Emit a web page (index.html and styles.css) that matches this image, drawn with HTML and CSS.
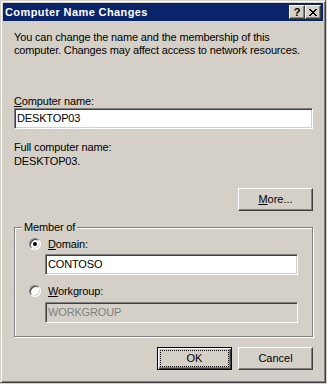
FILE: index.html
```html
<!DOCTYPE html>
<html lang="en">
<head>
    <meta charset="UTF-8">
    <meta name="viewport" content="width=device-width, initial-scale=1.0">
    <title>Computer Name Changes</title>
    <link rel="stylesheet" href="styles.css">
</head>
<body>

<div class="window">
    <div class="titlebar">
        <span class="title">Computer Name Changes</span>
        <div class="caption-btns">
            <button class="cap help">?</button>
            <button class="cap close">
                <svg width="8" height="7" viewBox="0 0 8 7" shape-rendering="crispEdges">
                    <path d="M0 0h2v1H0zM6 0h2v1H6zM1 1h2v1H1zM5 1h2v1H5zM2 2h4v1H2zM3 3h2v1H3zM2 4h4v1H2zM1 5h2v1H1zM5 5h2v1H5zM0 6h2v1H0zM6 6h2v1H6z" fill="#000"/>
                </svg>
            </button>
        </div>
    </div>

    <div class="content">
        <p class="intro">You can change the name and the membership of this<br>computer. Changes may affect access to network resources.</p>

        <div class="label name-label"><u>C</u>omputer name:</div>
        <div class="field">DESKTOP03</div>

        <div class="label full-label">Full computer name:</div>
        <div class="label full-value">DESKTOP03.</div>

        <div class="btn-row more-row">
            <button class="btn"><u>M</u>ore...</button>
        </div>

        <div class="group">
            <div class="group-title">Member of</div>

            <div class="opt opt-domain">
                <span class="radio checked"></span>
                <span><u>D</u>omain:</span>
            </div>
            <div class="field indent">CONTOSO</div>

            <div class="opt opt-work">
                <span class="radio"></span>
                <span><u>W</u>orkgroup:</span>
            </div>
            <div class="field indent disabled">WORKGROUP</div>
        </div>

        <div class="btn-row actions">
            <button class="btn default"><span class="focus">OK</span></button>
            <button class="btn">Cancel</button>
        </div>
    </div>
</div>

</body>
</html>
```

FILE: styles.css
```css
body {
    margin: 0;
    background-color: #D4D0C8;
    font-family: "Liberation Sans", Arial, sans-serif;
    font-size: 11px;
    line-height: 13px;
    letter-spacing: -0.15px;
    color: #000;
}
u {
    text-decoration: underline;
    text-underline-offset: 1px;
}
.window {
    width: 326px;
    height: 383px;
    box-sizing: border-box;
    border: 1px solid;
    border-color: #D4D0C8 #404040 #404040 #D4D0C8;
    box-shadow: inset 1px 1px #fff, inset -1px -1px #808080;
    padding: 2px;
}
.titlebar {
    height: 18px;
    background-color: #0A246A;
    display: flex;
    align-items: center;
    justify-content: space-between;
    padding: 0 2px 0 2px;
}
.title {
    color: #fff;
    font-weight: bold;
    letter-spacing: 0.4px;
}
.caption-btns {
    display: flex;
    gap: 0;
}
.cap {
    width: 16px;
    height: 14px;
    box-sizing: border-box;
    margin: 0;
    padding: 0;
    background-color: #D4D0C8;
    border: 1px solid;
    border-color: #fff #404040 #404040 #fff;
    box-shadow: inset -1px -1px #808080;
    display: flex;
    align-items: center;
    justify-content: center;
    font-family: "Liberation Sans", Arial, sans-serif;
    font-weight: bold;
    font-size: 11px;
    line-height: 11px;
    color: #000;
}
.cap.close {
    padding-top: 1px;
}
.content {
    padding: 0 10px 0 11px;
}
.intro {
    margin: 10px 0 0 0;
}
.name-label {
    margin-top: 38px;
}
.field {
    height: 21px;
    box-sizing: border-box;
    background-color: #fff;
    border: 1px solid;
    border-color: #808080 #fff #fff #808080;
    box-shadow: inset 1px 1px #404040, inset -1px -1px #D4D0C8;
    padding: 0 2px;
    line-height: 17px;
    padding-top: 1px;
}
.field.disabled {
    background-color: #D4D0C8;
    color: #808080;
}
.full-label {
    margin-top: 12px;
}
.full-value {
    margin-top: 1px;
}
.btn-row {
    display: flex;
    justify-content: flex-end;
    gap: 6px;
}
.more-row {
    margin-top: 20px;
}
.btn {
    width: 75px;
    height: 23px;
    box-sizing: border-box;
    margin: 0;
    padding: 0;
    background-color: #D4D0C8;
    border: 1px solid;
    border-color: #fff #404040 #404040 #fff;
    box-shadow: inset -1px -1px #808080;
    font-family: "Liberation Sans", Arial, sans-serif;
    font-size: 11px;
    line-height: 13px;
    color: #000;
}
.btn.default {
    border: 1px solid #000;
    box-shadow: inset 1px 1px #fff, inset -1px -1px #404040, inset -2px -2px #808080;
    padding: 2px;
    display: flex;
}
.focus {
    flex: 1;
    border: 1px dotted #000;
    display: flex;
    align-items: center;
    justify-content: center;
}
.group {
    margin-top: 16px;
    border: 1px solid #808080;
    box-shadow: inset 1px 1px #fff, 1px 1px #fff;
    padding: 0 14px 13px 14px;
}
.group-title {
    width: fit-content;
    margin: -7px 0 0 -7px;
    padding: 0 2px;
    background-color: #D4D0C8;
}
.opt {
    display: flex;
    align-items: flex-start;
    gap: 7px;
}
.opt-domain {
    margin-top: 4px;
}
.opt-work {
    margin-top: 10px;
}
.radio {
    width: 12px;
    height: 12px;
    box-sizing: border-box;
    border-radius: 50%;
    border: 1px solid;
    border-color: #808080 #fff #fff #808080;
    box-shadow: inset 1px 1px #404040, inset -1px -1px #D4D0C8;
    background-color: #fff;
    display: flex;
    align-items: center;
    justify-content: center;
}
.radio.checked::after {
    content: "";
    width: 4px;
    height: 4px;
    border-radius: 50%;
    background-color: #000;
}
.indent {
    margin-left: 16px;
    margin-top: 3px;
}
.opt-work + .indent {
    margin-top: 4px;
}
.actions {
    margin-top: 10px;
}
```
